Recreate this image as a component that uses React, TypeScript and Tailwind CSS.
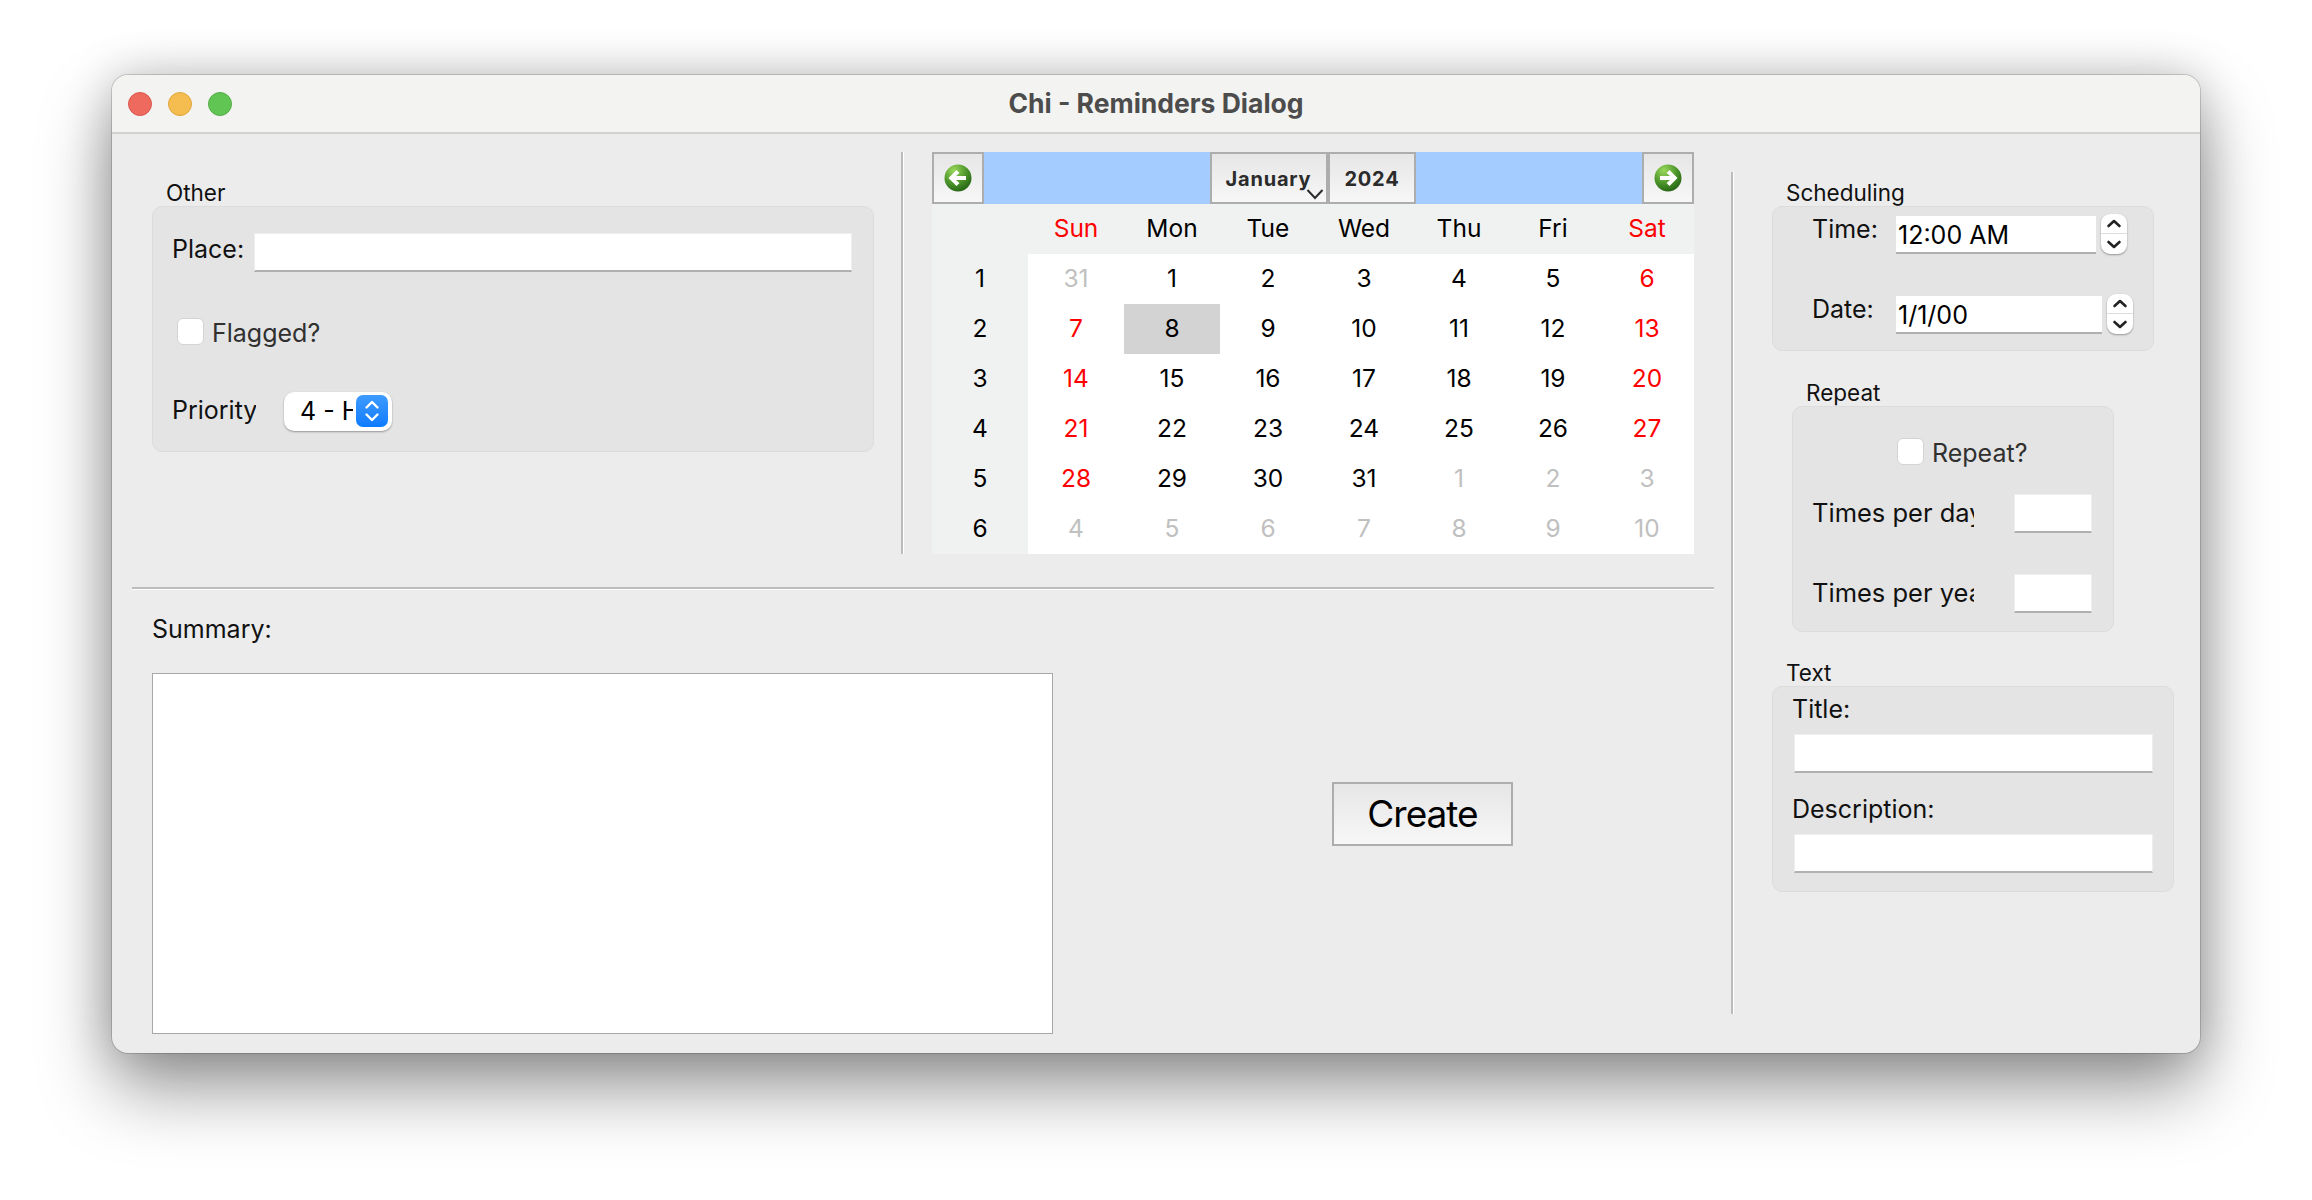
import React from "react";

const weeks: number[][] = [
  [31, 1, 2, 3, 4, 5, 6],
  [7, 8, 9, 10, 11, 12, 13],
  [14, 15, 16, 17, 18, 19, 20],
  [21, 22, 23, 24, 25, 26, 27],
  [28, 29, 30, 31, 1, 2, 3],
  [4, 5, 6, 7, 8, 9, 10],
];
const dayNames = ["Sun", "Mon", "Tue", "Wed", "Thu", "Fri", "Sat"];

const Input = ({ className }: { className: string }) => (
  <div className={`bg-white border-t border-x border-[#eeeeee] border-b-2 border-b-[#b0b0b0] ${className}`} />
);

const Check = ({ label }: { label: string }) => (
  <div className="flex items-center">
    <div className="w-[27px] h-[27px] rounded-[6px] bg-white border border-[#d4d4d4]" />
    <span className="ml-[8px] translate-y-[2px] text-[25px] leading-[27px] text-[#303030]">{label}</span>
  </div>
);

const Stepper = ({ className }: { className: string }) => (
  <div className={`w-[26px] h-[40px] rounded-[9px] bg-white shadow-[0_1px_2px_rgba(0,0,0,0.35)] flex flex-col ${className}`}>
    <div className="h-[20px] border-b border-[#dedede] flex items-center justify-center">
      <svg width="16" height="11" viewBox="0 0 16 11" fill="none" stroke="#222" strokeWidth="2.6" strokeLinecap="round" strokeLinejoin="round">
        <path d="M2.5 8 8 3 13.5 8" />
      </svg>
    </div>
    <div className="h-[20px] flex items-center justify-center">
      <svg width="16" height="11" viewBox="0 0 16 11" fill="none" stroke="#222" strokeWidth="2.6" strokeLinecap="round" strokeLinejoin="round">
        <path d="M2.5 3 8 8 13.5 3" />
      </svg>
    </div>
  </div>
);

const NavArrow = ({ dir, id }: { dir: "left" | "right"; id: string }) => (
  <div className="w-[52px] h-[52px] border-2 border-[#adadad] bg-linear-to-b from-[#e6e6e6] to-[#f7f7f7] flex items-center justify-center">
    <svg width="28" height="28" viewBox="0 0 28 28">
      <defs>
        <radialGradient id={id} cx="35%" cy="22%" r="85%">
          <stop offset="0%" stopColor="#9ad75a" />
          <stop offset="55%" stopColor="#4c962a" />
          <stop offset="100%" stopColor="#235f14" />
        </radialGradient>
      </defs>
      <circle cx="14" cy="14" r="13.5" fill={`url(#${id})`} />
      <path
        d={dir === "left" ? "M4.5 14 12.5 6 15.5 9 12 12 H22 V16 H12 L15.5 19 12.5 22 Z" : "M23.5 14 15.5 6 12.5 9 16 12 H6 V16 H16 L12.5 19 15.5 22 Z"}
        fill="#fff"
      />
    </svg>
  </div>
);

const Calendar = () => (
  <div className="w-[762px] ml-[28px] flex flex-col">
    <div className="flex h-[52px] bg-[#a4ccff]">
      <NavArrow dir="left" id="gl" />
      <div className="flex-1" />
      <div className="relative w-[118px] h-[52px] border-2 border-[#adadad] bg-linear-to-b from-[#e6e6e6] to-[#f7f7f7] flex items-center justify-center text-[#2b2b2b] text-[20px] font-bold tracking-[0.8px]">
        <span className="-ml-[1px] mt-[1px]">January</span>
        <svg className="absolute right-[2px] bottom-[2px]" width="18" height="12" viewBox="0 0 18 12" fill="none" stroke="#2b2b2b" strokeWidth="2">
          <path d="M1.5 2 9 10 16.5 2" />
        </svg>
      </div>
      <div className="w-[88px] h-[52px] border-2 border-[#adadad] bg-linear-to-b from-[#e6e6e6] to-[#f7f7f7] flex items-center justify-center text-[#2b2b2b] text-[20px] font-bold tracking-[0.8px]">
        <span className="mt-[1px]">2024</span>
      </div>
      <div className="flex-1" />
      <NavArrow dir="right" id="gr" />
    </div>
    <div className="grid grid-cols-[96px_96px_96px_96px_96px_94px_94px_94px] auto-rows-[50px] text-[24.5px] text-black bg-[#f0f2f2]">
      <div />
      {dayNames.map((d, i) => (
        <div key={d} className={`flex items-center justify-center pb-[2px] ${i === 0 || i === 6 ? "text-[#ff0000]" : ""}`}>
          {d}
        </div>
      ))}
      {weeks.map((row, w) => (
        <React.Fragment key={w}>
          <div className="flex items-center justify-center pb-[2px]">{w + 1}</div>
          {row.map((n, i) => {
            const muted = (w === 0 && n > 7) || (w >= 4 && n < 15);
            const weekend = i === 0 || i === 6;
            const selected = w === 1 && i === 1;
            return (
              <div
                key={i}
                className={`flex items-center justify-center pb-[2px] ${selected ? "bg-[#d3d3d3]" : "bg-white"} ${
                  muted ? "text-[#c0c0c0]" : weekend ? "text-[#ff0000]" : "text-black"
                }`}
              >
                {n}
              </div>
            );
          })}
        </React.Fragment>
      ))}
    </div>
  </div>
);

const OtherGroup = () => (
  <div className="w-[722px] pt-[28px]">
    <div className="pl-[14px] h-[26px] leading-[26px] text-[22.5px] text-[#111]">Other</div>
    <div className="h-[246px] rounded-[10px] bg-[#e4e4e4] border border-[#dcdcdc] pl-[19px] pt-[26px] flex flex-col">
      <div className="flex items-start">
        <span className="w-[82px] mt-[3px] h-[26px] leading-[26px] text-[25px] text-[#111]">Place:</span>
        <Input className="w-[598px] h-[39px]" />
      </div>
      <div className="mt-[46px] ml-[5px]">
        <Check label="Flagged?" />
      </div>
      <div className="mt-[47px] flex items-start">
        <span className="w-[84px] mt-[5px] h-[30px] leading-[26px] text-[25px] text-[#111] overflow-hidden whitespace-nowrap">Priority</span>
        <div className="ml-[28px] w-[108px] h-[39px] rounded-[10px] bg-white shadow-[0_1px_2px_rgba(0,0,0,0.35)] flex">
          <span className="ml-[16px] w-[53px] overflow-hidden whitespace-nowrap text-[25px] leading-[39px] text-black">4 - High</span>
          <div className="ml-[3px] mt-[3px] w-[32px] h-[32px] rounded-[7px] bg-linear-to-b from-[#3d9bff] to-[#0a7bff] flex items-center justify-center">
            <svg width="18" height="26" viewBox="0 0 18 26" fill="none" stroke="#fff" strokeWidth="2.4" strokeLinecap="round" strokeLinejoin="round">
              <path d="M3.5 9.5 9 4 14.5 9.5" />
              <path d="M3.5 16.5 9 22 14.5 16.5" />
            </svg>
          </div>
        </div>
      </div>
    </div>
  </div>
);

const RightPanel = () => (
  <div className="pt-[46px] pl-[1px] flex flex-col">
    <div className="ml-[37px] pl-[14px] h-[26px] leading-[26px] text-[22.5px] text-[#111]">Scheduling</div>
    <div className="ml-[37px] w-[382px] h-[145px] rounded-[10px] bg-[#e4e4e4] border border-[#dcdcdc] pt-[9px]">
      <div className="flex items-start h-[38px]">
        <span className="ml-[39px] w-[84px] h-[26px] leading-[26px] text-[25px] text-[#111]">Time:</span>
        <div className="w-[200px] h-[38px] bg-white border-b-2 border-[#b0b0b0] pl-[2px] text-[25px] leading-[38px] text-black">12:00 AM</div>
        <Stepper className="ml-[5px] -mt-[2px]" />
      </div>
      <div className="flex items-start h-[38px] mt-[42px]">
        <span className="ml-[39px] w-[84px] h-[26px] leading-[26px] text-[25px] text-[#111]">Date:</span>
        <div className="w-[206px] h-[38px] bg-white border-b-2 border-[#b0b0b0] pl-[2px] text-[25px] leading-[38px] text-black">1/1/00</div>
        <Stepper className="ml-[5px] -mt-[2px]" />
      </div>
    </div>

    <div className="mt-[29px] ml-[57px] pl-[14px] h-[26px] leading-[26px] text-[22.5px] text-[#111]">Repeat</div>
    <div className="ml-[57px] w-[322px] h-[226px] rounded-[10px] bg-[#e4e4e4] border border-[#dcdcdc] pt-[31px]">
      <div className="ml-[104px]">
        <Check label="Repeat?" />
      </div>
      <div className="flex items-center h-[39px] mt-[29px]">
        <span className="ml-[19px] w-[162px] overflow-hidden whitespace-nowrap text-[25.5px] text-[#111]">Times per day</span>
        <Input className="ml-[40px] w-[78px] h-[39px]" />
      </div>
      <div className="flex items-center h-[39px] mt-[41px]">
        <span className="ml-[19px] w-[162px] overflow-hidden whitespace-nowrap text-[25.5px] text-[#111]">Times per year</span>
        <Input className="ml-[40px] w-[78px] h-[39px]" />
      </div>
    </div>

    <div className="mt-[28px] ml-[37px] pl-[14px] h-[26px] leading-[26px] text-[22.5px] text-[#111]">Text</div>
    <div className="ml-[37px] w-[402px] h-[206px] rounded-[10px] bg-[#e4e4e4] border border-[#dcdcdc] pt-[9px] pl-[19px]">
      <div className="h-[26px] leading-[26px] text-[25px] text-[#111]">Title:</div>
      <Input className="mt-[12px] ml-[2px] w-[359px] h-[39px]" />
      <div className="mt-[23px] h-[26px] leading-[26px] text-[25px] text-[#111]">Description:</div>
      <Input className="mt-[12px] ml-[2px] w-[359px] h-[39px]" />
    </div>
  </div>
);

export default function App() {
  return (
    <div className="h-[1200px] bg-white overflow-hidden pt-[75px] pl-[112px] font-['Inter',sans-serif]">
      <div className="w-[2088px] h-[978px] rounded-[16px] bg-[#ececec] shadow-[0_0_0_1px_rgba(0,0,0,0.16),0_36px_72px_rgba(0,0,0,0.4),0_0_48px_rgba(0,0,0,0.2)] flex flex-col overflow-hidden">
        {/* title bar */}
        <div className="relative h-[59px] shrink-0 bg-[#f3f3f1] border-b-2 border-[#d2d2d0] flex items-center justify-center">
          <div className="absolute left-[16px] top-[17px] flex gap-[16px]">
            <div className="w-[24px] h-[24px] rounded-full bg-[#ee6a5f] border border-[#d9584e]" />
            <div className="w-[24px] h-[24px] rounded-full bg-[#f5bd4f] border border-[#dfa63c]" />
            <div className="w-[24px] h-[24px] rounded-full bg-[#61c554] border border-[#52ae46]" />
          </div>
          <span className="text-[26.5px] font-bold text-[#4c4c4c]">Chi - Reminders Dialog</span>
        </div>

        <div className="flex flex-1">
          <div className="w-[1619px] flex flex-col">
            <div className="flex pt-[18px] pl-[40px]">
              <OtherGroup />
              <div className="ml-[27px] w-[3px] h-[402px] border-l-2 border-r border-l-[#bcbcbc] border-r-white" />
              <Calendar />
            </div>
            <div className="mt-[33px] ml-[20px] w-[1582px] h-[3px] border-t-2 border-b border-t-[#bcbcbc] border-b-white" />
            <div className="flex pl-[40px] pt-[26px]">
              <div className="w-[901px]">
                <div className="h-[26px] leading-[26px] text-[25px] text-[#111]">Summary:</div>
                <div className="mt-[31px] h-[361px] bg-white border border-[#a8a8a8]" />
              </div>
              <div className="ml-[279px] mt-[166px] w-[181px] h-[64px] border-2 border-[#adadad] bg-linear-to-b from-[#e6e6e6] to-[#f7f7f7] flex items-center justify-center text-[37px] text-black tracking-[-1px]">
                Create
              </div>
            </div>
          </div>
          <div className="mt-[38px] w-[3px] h-[842px] border-l-2 border-r border-l-[#bcbcbc] border-r-white" />
          <RightPanel />
        </div>
      </div>
    </div>
  );
}
